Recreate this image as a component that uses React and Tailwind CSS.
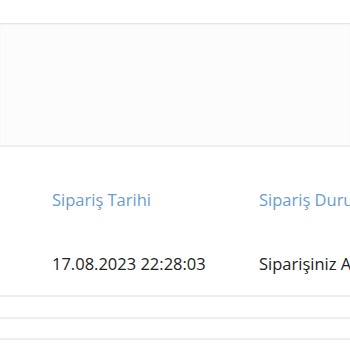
export default function App() {
  return (
    <div className="w-[350px] h-[350px] overflow-hidden bg-white font-['Open_Sans',sans-serif]">
      <div className="h-[23px]" />
      <div className="h-[124px] bg-[#fcfcfc] border-t border-t-[#e6e6e6] border-b-2 border-b-[#efefef] shadow-[0_1px_2px_rgba(0,0,0,0.04)_inset]" />
      <div className="flex pl-[52px] pt-[42px] pb-[20px] whitespace-nowrap text-[16.5px]">
        <div className="w-[207px] shrink-0 flex flex-col">
          <span className="text-[#6a9ccf] leading-[22px]">Sipariş Tarihi</span>
          <span className="text-[#222] leading-[22px] mt-[42px]">17.08.2023 22:28:03</span>
        </div>
        <div className="shrink-0 flex flex-col">
          <span className="text-[#6a9ccf] leading-[22px]">Sipariş Durumu</span>
          <span className="text-[#222] leading-[22px] mt-[42px]">Siparişiniz Alındı</span>
        </div>
      </div>
      <div className="border-t-2 border-[#eeeeee] h-[22px]" />
      <div className="border-t-2 border-[#eeeeee] h-[21px]" />
      <div className="border-t-2 border-[#eeeeee]" />
    </div>
  )
}
